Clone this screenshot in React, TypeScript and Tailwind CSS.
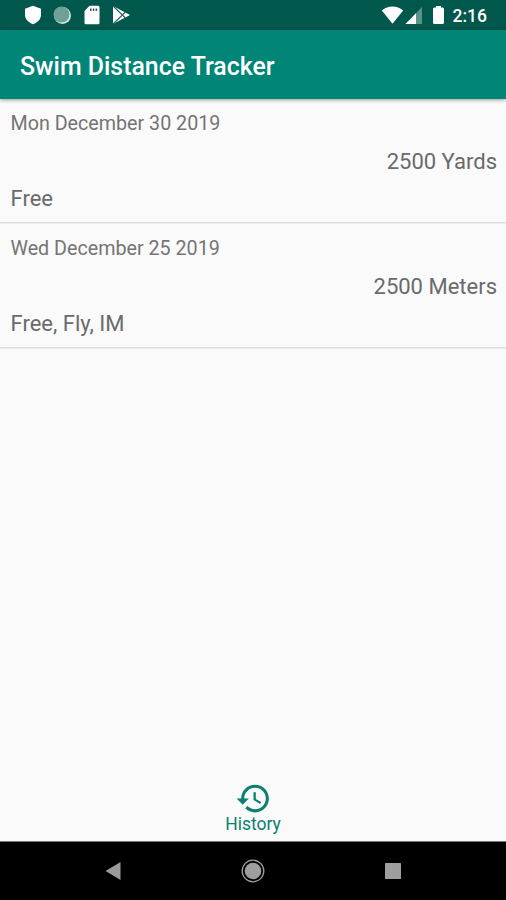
import React from 'react';

type Swim = { date: string; distance: string; strokes: string };

const swims: Swim[] = [
  { date: 'Mon December 30 2019', distance: '2500 Yards', strokes: 'Free' },
  { date: 'Wed December 25 2019', distance: '2500 Meters', strokes: 'Free, Fly, IM' },
];

function StatusBar() {
  return (
    <div className="flex h-[30px] shrink-0 items-center justify-between bg-[#00574b] pl-[24px] pr-[19px]">
      <div className="flex items-center">
        <svg width="18" height="20" viewBox="0 0 18 20" fill="#fff">
          <path d="M9 .8 17 3.8v6c0 4.2-3.2 7.8-8 9.4C4.200 17.600 1 14 1 9.800v-6z" />
        </svg>
        <svg className="ml-[10px]" width="20" height="20" viewBox="0 0 20 20">
          <circle cx="10.500" cy="10.500" r="8.500" fill="#d7e7e4" />
          <circle cx="9.500" cy="9.500" r="8" fill="#6fa198" />
        </svg>
        <svg className="ml-[11px]" width="18" height="20" viewBox="0 0 18 20">
          <path d="M6.500 .8H15a1.500 1.500 0 0 1 1.500 1.500v15.400a1.500 1.500 0 0 1-1.500 1.500H3a1.500 1.500 0 0 1-1.500-1.500V6z" fill="#fff" />
          <path d="M7 3.500h1.500v2.500H7zM9.800 3.500h1.500v2.500H9.800zM12.600 3.500h1.500v2.500H12.600z" fill="#315f57" />
        </svg>
        <svg className="ml-[10px]" width="20" height="20" viewBox="0 0 20 20">
          <path d="M2 1v18l17-9z" fill="#fff" />
          <path d="M2 1 14.500 13M2 19 14.500 7" stroke="#315f57" strokeWidth="1.100" />
        </svg>
      </div>
      <div className="flex items-center">
        <svg width="23" height="20" viewBox="0 0 23 20">
          <path d="M.8 5.500C7 .3 16 .3 22.200 5.500L11.500 18.800z" fill="#fff" />
        </svg>
        <svg className="ml-[1px]" width="18" height="20" viewBox="0 0 18 20">
          <path d="M17 2v17H.5z" fill="#5c928a" />
          <path d="M11 8.200V19H.5z" fill="#fff" />
        </svg>
        <svg className="ml-[9px]" width="13" height="20" viewBox="0 0 13 20">
          <path d="M4 1h5v1.500h1.500A1.500 1.500 0 0 1 12 4v13.500a1.500 1.500 0 0 1-1.500 1.500h-8A1.500 1.500 0 0 1 1 17.500V4a1.500 1.500 0 0 1 1.500-1.500H4z" fill="#fff" />
        </svg>
        <span className="ml-[8px] mt-[3px] text-[17.500px] leading-none font-medium text-white">2:16</span>
      </div>
    </div>
  );
}

function SwimRow({ swim }: { swim: Swim }) {
  return (
    <li className="flex h-[125px] flex-col pl-[10.500px] pr-[9px] pt-[6px] text-[22px] leading-[38px] text-[#6a6a6a] shadow-[inset_0_-1px_0_#ececec,inset_0_-2px_0_#dedede]">
      <span className="text-[19.700px] text-[#747474]">{swim.date}</span>
      <span className="text-right">{swim.distance}</span>
      <span className="-mt-px">{swim.strokes}</span>
    </li>
  );
}

export default function App() {
  return (
    <div className="flex h-[900px] w-[506px] flex-col overflow-hidden bg-[#fafafa] font-[Roboto,sans-serif]">
      <StatusBar />
      <header className="z-10 flex h-[69px] shrink-0 items-center bg-[#008577] pl-[20px] pt-[5px] shadow-[0_1px_4px_rgba(0,0,0,0.4)]">
        <h1 className="text-[24.900px] leading-none font-medium text-white">Swim Distance Tracker</h1>
      </header>
      <ul className="flex-1">
        {swims.map((swim) => (
          <SwimRow key={swim.date} swim={swim} />
        ))}
      </ul>
      <button className="flex h-[61px] shrink-0 flex-col items-center text-[#0b7f71]">
        <svg width="37" height="37" viewBox="0 0 24 24" fill="currentColor">
          <path d="M13 3c-4.970 0-9 4.030-9 9H1l3.890 3.890.07.14L9 12H6c0-3.870 3.130-7 7-7s7 3.130 7 7-3.130 7-7 7c-1.930 0-3.680-.79-4.940-2.060l-1.420 1.420C8.270 19.990 10.510 21 13 21c4.970 0 9-4.030 9-9s-4.030-9-9-9zm-1 5v5l4.280 2.540.72-1.210-3.500-2.080V8H12z" />
        </svg>
        <span className="text-[17.500px] leading-[14px]">History</span>
      </button>
      <nav className="flex h-[59px] shrink-0 items-center justify-between border-t border-[#777] bg-black pl-[105px] pr-[105px]">
        <svg width="16" height="18" viewBox="0 0 16 18" fill="#9b9b9b">
          <path d="M15.500 0v18L.5 9z" />
        </svg>
        <svg width="24" height="24" viewBox="0 0 24 24">
          <circle cx="12" cy="12" r="8.300" fill="#9e9e9e" />
          <circle cx="12" cy="12" r="10.800" fill="none" stroke="#9e9e9e" strokeWidth="1.300" />
        </svg>
        <svg width="16" height="16" viewBox="0 0 16 16">
          <rect width="16" height="16" rx=".5" fill="#9e9e9e" />
        </svg>
      </nav>
    </div>
  );
}
